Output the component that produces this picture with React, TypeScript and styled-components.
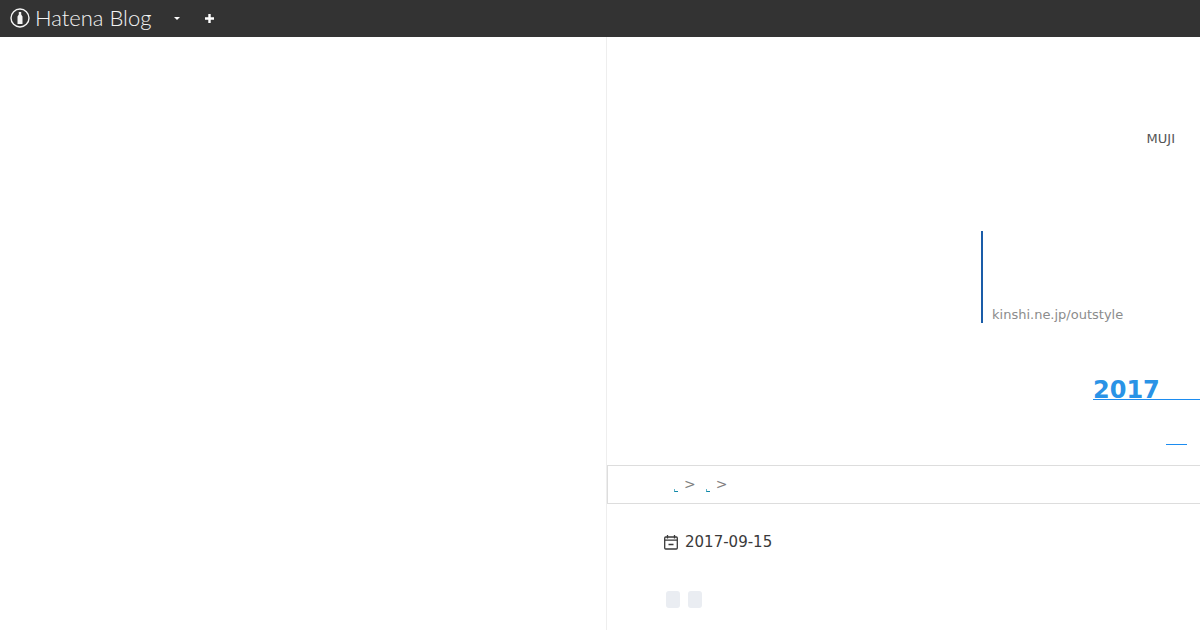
import styled, { createGlobalStyle } from "styled-components";

const GlobalStyle = createGlobalStyle`
  html, body {
    margin: 0;
    padding: 0;
    background: white;
    font-family: "DejaVu Sans", sans-serif;
    overflow: hidden;
  }
`;

const Wrapper = styled.div`
  display: flex;
  flex-direction: column;
  width: 1200px;
  height: 630px;
  overflow: hidden;
`;

const Toolbar = styled.div`
  flex: 0 0 37px;
  box-sizing: border-box;
  background-color: #333333;
  display: flex;
  align-items: center;
  padding: 0 0 1px 10px;
  color: white;
`;

const LogoText = styled.span`
  font-family: "Lato", sans-serif;
  font-weight: 300;
  font-size: 22px;
  line-height: 24px;
  margin-left: 5px;
  width: 118px;
  white-space: nowrap;
  color: #f4f4f4;
`;

const MenuCaret = styled.span`
  width: 0;
  height: 0;
  margin-left: 21px;
  border-left: 3px solid transparent;
  border-right: 3px solid transparent;
  border-top: 3px solid white;
`;

const PlusIcon = styled.svg`
  width: 11px;
  height: 11px;
  margin-left: 24px;
`;

const Page = styled.div`
  flex: 1;
  display: flex;
  min-height: 0;
`;

const Sidebar = styled.div`
  flex: 0 0 606px;
`;

const Main = styled.div`
  flex: 1;
  border-left: 1px solid #eeeeee;
  display: flex;
  flex-direction: column;
  min-width: 0;
`;

const Brand = styled.div`
  margin-top: 94px;
  align-self: flex-end;
  margin-right: 25px;
  font-size: 13px;
  line-height: 16px;
  color: #555555;
`;

const Quote = styled.div`
  margin: 84px 0 0 374px;
  height: 92px;
  border-left: 2px solid #1a5ca8;
  padding-left: 9px;
  box-sizing: border-box;
  display: flex;
  align-items: flex-end;
`;

const QuoteSource = styled.span`
  font-size: 13px;
  line-height: 16px;
  color: #8c8c8c;
`;

const Heading = styled.a`
  margin: 59px 0 0 486px;
  font-size: 24px;
  line-height: 17px;
  font-weight: 700;
  color: #2a93e6;
  border-bottom: 1px solid #1c8cf0;
`;

const ShortRule = styled.div`
  margin: 44px 0 0 559px;
  width: 21px;
  height: 1px;
  background-color: #1c8cf0;
`;

const Breadcrumb = styled.div`
  margin-top: 20px;
  height: 39px;
  box-sizing: border-box;
  border: 1px solid #dddddd;
  border-right: none;
  display: flex;
  align-items: center;
  padding-left: 66px;
`;

const CrumbLink = styled.span`
  width: 4px;
  height: 3px;
  margin-top: 11px;
  border-left: 1px solid #5fb4c8;
  border-bottom: 1px solid #1088a8;
  box-sizing: border-box;
`;

const CrumbSeparator = styled.span`
  font-size: 14px;
  line-height: 16px;
  margin: 0 10px 2px 6px;
  color: #808080;
`;

const DateRow = styled.div`
  margin: 28px 0 0 57px;
  display: flex;
  align-items: center;
  gap: 7px;
  font-size: 15px;
  line-height: 20px;
  color: #3a3a3a;
`;

const DateIcon = styled.svg`
  flex: none;
  width: 14px;
  height: 16px;
  margin-top: -1px;
`;

const TagRow = styled.div`
  margin: 39px 0 0 59px;
  display: flex;
  gap: 8px;
`;

const TagPlaceholder = styled.span`
  width: 14px;
  height: 17px;
  border-radius: 3px;
  background-color: #eaedf2;
`;

export default function App() {
  return (
    <Wrapper>
      <GlobalStyle />
      <Toolbar>
        <svg width="20" height="20" viewBox="0 0 20 20">
          <circle cx="10" cy="10" r="9" fill="none" stroke="#f4f4f4" strokeWidth="1.4" />
          <path d="M8.8 4h2.4v2.4l1.3 2V16h-5V8.4l1.3-2z" fill="#f4f4f4" />
        </svg>
        <LogoText>Hatena Blog</LogoText>
        <MenuCaret />
        <PlusIcon viewBox="0 0 11 11">
          <path d="M5.5 1v9M1 5.5h9" stroke="white" strokeWidth="2.4" />
        </PlusIcon>
      </Toolbar>
      <Page>
        <Sidebar />
        <Main>
          <Brand>MUJI</Brand>
          <Quote>
            <QuoteSource>kinshi.ne.jp/outstyle</QuoteSource>
          </Quote>
          <Heading>2017</Heading>
          <ShortRule />
          <Breadcrumb>
            <CrumbLink />
            <CrumbSeparator>&gt;</CrumbSeparator>
            <CrumbLink />
            <CrumbSeparator>&gt;</CrumbSeparator>
          </Breadcrumb>
          <DateRow>
            <DateIcon viewBox="0 0 14 16" fill="none" stroke="#3a3a3a" strokeWidth="1.3">
              <rect x="0.7" y="3" width="12.6" height="12" rx="1" />
              <path d="M0.7 6.2h12.6M3.5 1v3.5M10.5 1v3.5M4.5 10.5h5" />
            </DateIcon>
            2017-09-15
          </DateRow>
          <TagRow>
            <TagPlaceholder />
            <TagPlaceholder />
          </TagRow>
        </Main>
      </Page>
    </Wrapper>
  );
}
